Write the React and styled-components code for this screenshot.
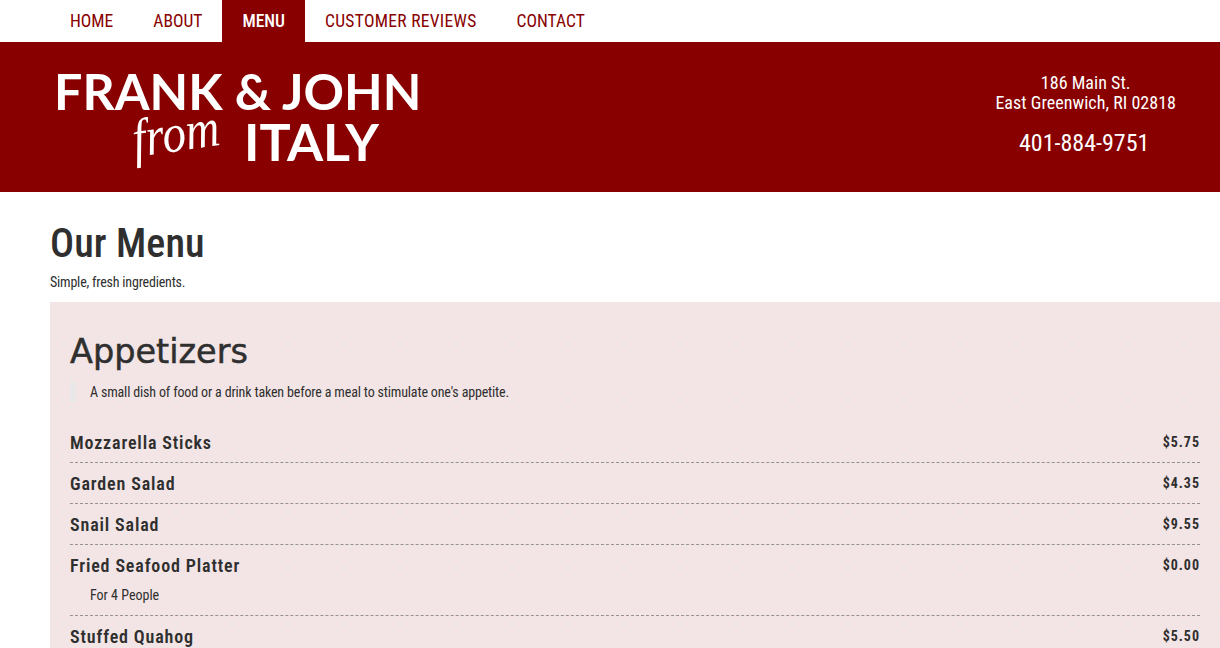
import React from 'react';
import styled, { createGlobalStyle } from 'styled-components';

const RED = '#880000';
const INK = '#2f2f2f';

const GlobalStyle = createGlobalStyle`
  html, body {
    margin: 0;
    padding: 0;
    height: 648px;
    overflow: hidden;
    background: #fff;
    font-family: Roboto, "Liberation Sans", sans-serif;
    font-stretch: 75%;
    color: ${INK};
  }
  * { box-sizing: border-box; }
`;

const Nav = styled.nav`
  display: flex;
  height: 42px;
  padding-left: 50px;
  background: #fff;
`;

const NavItem = styled.a`
  display: flex;
  align-items: center;
  padding: 0 20px 1px;
  font-size: 17.5px;
  letter-spacing: ${(p) => p.$tracking || 0}px;
  color: ${(p) => (p.$active ? '#fff' : RED)};
  background: ${(p) => (p.$active ? RED : 'transparent')};
  font-weight: ${(p) => (p.$active ? 500 : 400)};
`;

const Header = styled.header`
  display: flex;
  justify-content: space-between;
  height: 150px;
  background: ${RED};
  color: #fff;
  padding: 24px 44px 0 54px;
`;

const Logo = styled.div`
  display: flex;
  flex-direction: column;
  width: 366px;
  font-family: Lato, sans-serif;
  font-stretch: 100%;
  font-weight: 700;
`;

const LogoLine = styled.div`
  font-size: ${(p) => p.$size}px;
  line-height: 50px;
  white-space: nowrap;
`;

const LogoBottom = styled.div`
  display: flex;
  align-items: center;
  padding-left: 78px;
`;

const LogoFrom = styled.span`
  width: 112px;
  font-family: "Liberation Serif", serif;
  font-style: italic;
  font-weight: 400;
  font-size: 47px;
  line-height: 50px;
  transform: translateY(-10px) rotate(-8deg) scaleY(1.15);
`;

const Contact = styled.div`
  display: flex;
  flex-direction: column;
  align-items: center;
  padding-top: 7px;
`;

const Address = styled.div`
  font-size: 18px;
  letter-spacing: 0.03px;
  line-height: 20px;
  text-align: center;
`;

const Phone = styled.div`
  margin-top: 16px;
  padding-right: 3px;
  font-size: 24px;
  line-height: 28px;
  font-weight: 450;
`;

const Main = styled.main`
  padding: 30px 0 0 50px;
`;

const Title = styled.h1`
  margin: 0;
  font-size: 40px;
  line-height: 44px;
  font-weight: 550;
  letter-spacing: 0.1px;
`;

const Lead = styled.p`
  margin: 6px 0 10px;
  font-size: 14px;
  letter-spacing: -0.2px;
  line-height: 20px;
`;

const Panel = styled.section`
  padding: 20px 20px 0;
  background-color: #f3e5e5;
  background-image: radial-gradient(rgba(225, 235, 235, 0.5) 1px, transparent 1px);
  background-size: 14px 14px;
`;

const Category = styled.h2`
  margin: 0;
  font-family: "DejaVu Sans", sans-serif;
  font-stretch: 100%;
  font-size: 33.5px;
  line-height: 60px;
  font-weight: 400;
  -webkit-text-stroke: 0.5px ${INK};
`;

const Quote = styled.blockquote`
  margin: 0 0 20px;
  padding-left: 14px;
  border-left: 6px solid #e9e7e9;
  font-size: 14px;
  letter-spacing: -0.16px;
  line-height: 20px;
`;

const Dish = styled.div`
  padding: 10px 0 9px;
  border-bottom: 1px dashed #979292;
  &:last-child { border-bottom: 0; }
`;

const DishRow = styled.div`
  display: flex;
  justify-content: space-between;
  align-items: center;
  line-height: 21px;
`;

const DishName = styled.span`
  font-size: 18px;
  font-weight: 650;
  letter-spacing: 0.85px;
`;

const Price = styled.span`
  font-size: 14px;
  font-weight: 700;
  letter-spacing: 1px;
`;

const DishNote = styled.div`
  margin: 9px 0 1px;
  padding-left: 20px;
  font-size: 14px;
  line-height: 20px;
`;

const navLinks = [
  { label: 'HOME' },
  { label: 'ABOUT' },
  { label: 'MENU', active: true },
  { label: 'CUSTOMER REVIEWS', tracking: 0.3 },
  { label: 'CONTACT' },
];

const dishes = [
  { name: 'Mozzarella Sticks', price: '$5.75' },
  { name: 'Garden Salad', price: '$4.35' },
  { name: 'Snail Salad', price: '$9.55' },
  { name: 'Fried Seafood Platter', price: '$0.00', note: 'For 4 People' },
  { name: 'Stuffed Quahog', price: '$5.50' },
];

const App = () => (
  <>
    <GlobalStyle />
    <Nav>
      {navLinks.map((link) => (
        <NavItem key={link.label} $active={link.active} $tracking={link.tracking}>{link.label}</NavItem>
      ))}
    </Nav>
    <Header>
      <Logo>
        <LogoLine $size={50.2}>FRANK &amp; JOHN</LogoLine>
        <LogoBottom>
          <LogoFrom>from</LogoFrom>
          <LogoLine $size={52}>ITALY</LogoLine>
        </LogoBottom>
      </Logo>
      <Contact>
        <Address>186 Main St.<br />East Greenwich, RI 02818</Address>
        <Phone>401-884-9751</Phone>
      </Contact>
    </Header>
    <Main>
      <Title>Our Menu</Title>
      <Lead>Simple, fresh ingredients.</Lead>
      <Panel>
        <Category>Appetizers</Category>
        <Quote>A small dish of food or a drink taken before a meal to stimulate one's appetite.</Quote>
        {dishes.map((dish) => (
          <Dish key={dish.name}>
            <DishRow>
              <DishName>{dish.name}</DishName>
              <Price>{dish.price}</Price>
            </DishRow>
            {dish.note && <DishNote>{dish.note}</DishNote>}
          </Dish>
        ))}
      </Panel>
    </Main>
  </>
);

export default App;
